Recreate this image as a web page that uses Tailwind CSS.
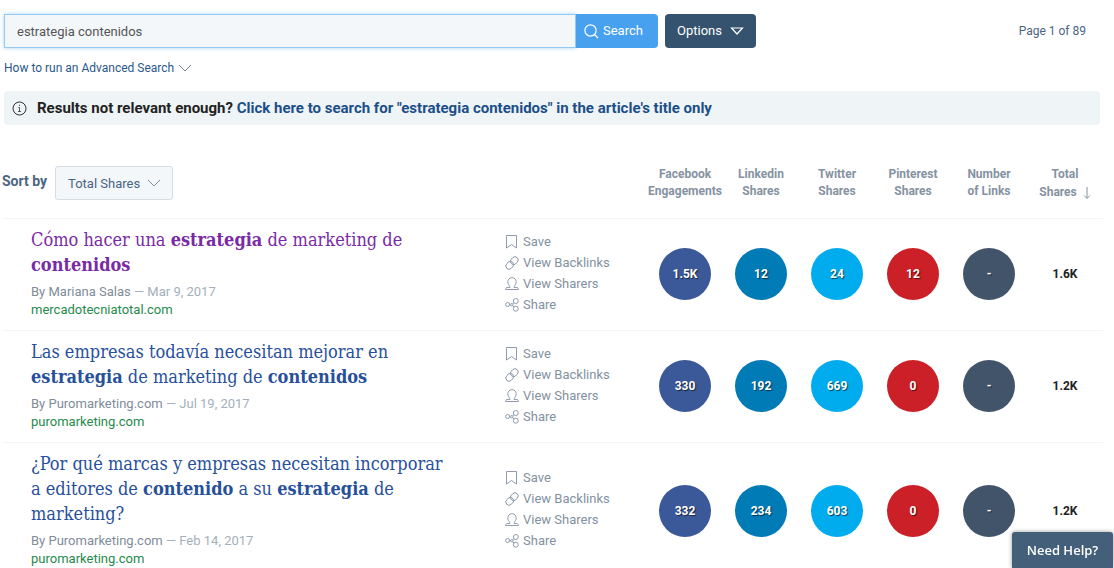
<!DOCTYPE html>
<html lang="en">
<head>
  <meta charset="UTF-8" />
  <meta name="viewport" content="width=device-width, initial-scale=1" />
  <title>Content search</title>
  <script src="https://cdn.jsdelivr.net/npm/@tailwindcss/browser@4"></script>
</head>
<body class="bg-white font-[Roboto,sans-serif] text-[13px] leading-[18px] text-[#4a6583]">
  <!-- Icons -->
  <svg class="hidden">
    <symbol id="icon-save" viewBox="0 0 14 14">
      <path d="M1.500.500h10v12.500l-5-3.500-5 3.500z" />
    </symbol>
    <symbol id="icon-link" viewBox="0 0 14 14">
      <rect x="-4.200" y="-3.200" width="8.400" height="6.400" rx="3.200" transform="translate(9.300 4.700) rotate(-45)" />
      <rect x="-4.200" y="-3.200" width="8.400" height="6.400" rx="3.200" transform="translate(4.700 9.300) rotate(-45)" />
    </symbol>
    <symbol id="icon-user" viewBox="0 0 14 14">
      <path d="M5 9.600C3.700 8.600 2.800 6.900 2.800 4.900 2.800 2.400 4.600.700 7 .700s4.200 1.700 4.200 4.200c0 2-.9 3.700-2.200 4.700v.9h2.800c1 0 1.600.700 1.600 1.600v.4H.600v-.4c0-.9.600-1.600 1.600-1.600H5z" />
    </symbol>
    <symbol id="icon-share" viewBox="0 0 14 14">
      <circle cx="2.600" cy="6.500" r="2" />
      <circle cx="10.800" cy="3" r="2.500" />
      <circle cx="10.800" cy="10.700" r="2.500" />
      <circle cx="6.800" cy="6.700" r="1.200" />
      <path d="M4.600 6.600h1M7.700 5.900l1.100-1.200M7.700 7.500l1.200 1.500" />
    </symbol>
  </svg>

  <form class="flex items-center pt-[14px] pr-7 pl-1" onsubmit="return false">
    <label for="query" class="sr-only">Search</label>
    <input id="query" type="text" value="estrategia contenidos"
      class="h-[34px] w-[572px] min-w-0 border border-[#93c9f2] bg-[#f3f7fa] px-3 text-[#555] shadow-[0_0_4px_#a9d5f7] outline-none" />
    <button type="submit" class="flex h-[34px] w-[82px] shrink-0 items-center gap-1 rounded-r bg-[#47a1ee] pl-2 text-white">
      <svg class="size-[15px]" viewBox="0 0 15 15" fill="none" stroke="currentColor" stroke-width="1.200">
        <circle cx="6.500" cy="6.500" r="5.600" />
        <path d="M10.500 10.500l3.500 3.500" />
      </svg>
      Search
    </button>
    <button type="button" class="ml-[7px] flex h-[34px] w-[91px] shrink-0 items-center justify-center gap-2 rounded bg-[#35536f] text-white">
      Options
      <svg class="h-2 w-[14px]" viewBox="0 0 14 8" fill="none" stroke="currentColor" stroke-width="1.200">
        <path d="M1.500 1h11L7 7z" />
      </svg>
    </button>
    <span class="ml-auto shrink-0 text-xs">Page 1 of 89</span>
  </form>

  <a href="#" class="mt-[11px] ml-1 inline-flex items-center gap-1 text-xs leading-[18px] text-[#2a588a]">
    How to run an Advanced Search
    <svg class="h-2 w-[14px]" viewBox="0 0 14 8" fill="none" stroke="#6d8299"><path d="M1 1l6 6 6-6" /></svg>
  </a>

  <div class="mt-[14px] mr-[14px] ml-1 flex h-[34px] items-center gap-[10px] rounded bg-[#eff4f7] px-2 text-[15px] font-bold text-[#222]">
    <svg class="size-[15px]" viewBox="0 0 15 15" fill="none" stroke="#333">
      <circle cx="7.500" cy="7.500" r="6.500" />
      <path d="M6.300 6.500h1.200v4M6 10.500h3M7.500 3.800v1.200" stroke-width=".8" />
    </svg>
    <p>Results not relevant enough? <a href="#" class="text-[#1c4f88]">Click here to search for "estrategia contenidos" in the article's title only</a></p>
  </div>

  <div class="mt-8 pr-[11px] pl-[2px]">
    <table class="w-full table-fixed">
      <thead>
        <tr class="h-[61px] border-b border-[#f2f4f6] align-top text-xs leading-[17px] text-[#8592a2]">
          <th class="text-left font-normal">
            <div class="flex items-start pt-[9px]">
              <label for="sort" class="pt-[6px] text-sm leading-[18px] font-bold text-[#4a6583]">Sort by</label>
              <div class="relative ml-2">
                <select id="sort" class="h-[34px] w-[118px] appearance-none rounded-[3px] border border-[#d5dde3] bg-[#f3f7fa] px-3 text-[13px] text-[#4a6583]">
                  <option>Total Shares</option>
                  <option>Facebook Engagements</option>
                  <option>Linkedin Shares</option>
                  <option>Twitter Shares</option>
                </select>
                <svg class="pointer-events-none absolute top-[13px] right-3 h-2 w-[14px]" viewBox="0 0 14 8" fill="none" stroke="#7d90a3"><path d="M1 1l6 6 6-6" /></svg>
              </div>
            </div>
          </th>
          <th class="w-[142px]"></th>
          <th class="w-[76px] pt-[9px]">Facebook Engagements</th>
          <th class="w-[76px] pt-[9px]">Linkedin<br />Shares</th>
          <th class="w-[76px] pt-[9px]">Twitter<br />Shares</th>
          <th class="w-[76px] pt-[9px]">Pinterest<br />Shares</th>
          <th class="w-[76px] pt-[9px]">Number<br />of Links</th>
          <th class="w-[76px] pt-[9px]">
            Total
            <span class="flex items-center justify-center gap-[6px] pt-px">
              Shares
              <svg class="h-3 w-2" viewBox="0 0 8 12" fill="none" stroke="currentColor"><path d="M4 0v11M1 8.500l3 3 3-3" /></svg>
            </span>
          </th>
        </tr>
      </thead>
      <tbody id="results"></tbody>
    </table>
  </div>

  <button class="fixed right-px bottom-0 h-9 w-[101px] rounded-t-[3px] bg-[#435f79] font-['Open_Sans',sans-serif] font-semibold text-white shadow-[0_0_4px_rgba(0,0,0,0.4)]">Need Help?</button>

  <script>
    const results = [
      {
        title: 'Cómo hacer una <b>estrategia</b> de marketing de <b>contenidos</b>',
        visited: true,
        author: 'Mariana Salas',
        date: 'Mar 9, 2017',
        site: 'mercadotecniatotal.com',
        counts: ['1.5K', '12', '24', '12', '-'],
        total: '1.6K',
      },
      {
        title: 'Las empresas todavía necesitan mejorar en <b>estrategia</b> de marketing de <b>contenidos</b>',
        author: 'Puromarketing.com',
        date: 'Jul 19, 2017',
        site: 'puromarketing.com',
        counts: ['330', '192', '669', '0', '-'],
        total: '1.2K',
      },
      {
        title: '¿Por qué marcas y empresas necesitan incorporar a editores de <b>contenido</b> a su <b>estrategia</b> de marketing?',
        author: 'Puromarketing.com',
        date: 'Feb 14, 2017',
        site: 'puromarketing.com',
        counts: ['332', '234', '603', '0', '-'],
        total: '1.2K',
      },
    ];

    const colors = ['bg-[#3b5998]', 'bg-[#007bb6]', 'bg-[#00aced]', 'bg-[#cb2027]', 'bg-[#425469]'];
    const actions = [
      ['icon-save', 'Save'],
      ['icon-link', 'View Backlinks'],
      ['icon-user', 'View Sharers'],
      ['icon-share', 'Share'],
    ];

    function renderAction([icon, label]) {
      return `
        <li>
          <button class="flex h-[21px] items-center gap-1">
            <svg class="size-[14px]" fill="none" stroke="currentColor" stroke-width="0.9"><use href="#${icon}" /></svg>
            ${label}
          </button>
        </li>`;
    }

    function renderCount(count, i) {
      return `
        <td>
          <span class="mx-auto flex size-[52px] items-center justify-center rounded-full text-xs font-bold text-white text-shadow-[1px_1px_1px_rgba(0,0,0,0.6)] ${colors[i]}">${count}</span>
        </td>`;
    }

    function renderResults() {
      document.getElementById('results').innerHTML = results.map((item) => `
        <tr class="border-b border-[#f2f4f6]">
          <td class="pt-2 pr-[52px] pb-[11px] pl-[29px]">
            <h2 class="mb-[6px] font-['Roboto_Slab','DejaVu_Serif_Condensed','DejaVu_Serif',serif] text-lg leading-[25px]">
              <a href="#" class="${item.visited ? 'text-[#7b2aa5]' : 'text-[#27509b]'}">${item.title}</a>
            </h2>
            <p class="text-[#a3afbb]"><span class="text-[#7f8c9a]">By ${item.author}</span> — ${item.date}</p>
            <a href="#" class="block text-[#1f8a4c]">${item.site}</a>
          </td>
          <td class="pb-[2px] text-[#8391a1]"><ul>${actions.map(renderAction).join('')}</ul></td>
          ${item.counts.map(renderCount).join('')}
          <td class="text-center text-xs font-bold text-[#222]">${item.total}</td>
        </tr>`).join('');
    }

    renderResults();
  </script>
</body>
</html>
